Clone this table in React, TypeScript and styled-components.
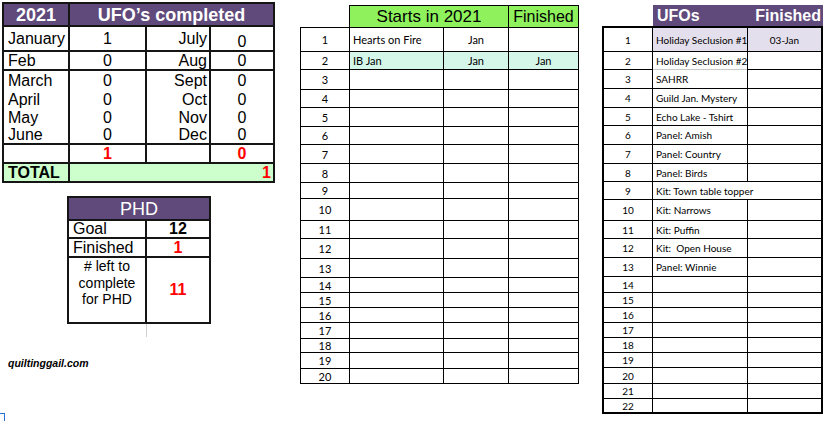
import React from "react";
import styled, { createGlobalStyle } from "styled-components";

const GlobalStyle = createGlobalStyle`
  html, body { margin: 0; padding: 0; background: #fff; }
  body { font-family: "Liberation Sans", Arial, sans-serif; color: #000; }
`;

const PURPLE = "#604a7b";
const LAVENDER = "#e4dfec";
const MINT = "#d5f7ea";
const LIME = "#8ff25d";
const PALE_GREEN = "#ccffcc";
const RED = "#ff0000";

const Page = styled.div`
  position: relative;
  display: flex;
  align-items: flex-start;
  width: 831px;
  height: 421px;
  overflow: hidden;
`;

/* ---------- left: monthly summary + PHD ---------- */

const LeftColumn = styled.div`
  display: flex;
  flex-direction: column;
  align-items: flex-start;
  margin: 2px 0 0 2px;
`;

const Summary = styled.div`
  display: grid;
  grid-template-columns: 64px 75px 62px 62px;
  grid-template-rows: 21px 23px 17px 17px 17px 16px 16px 17px 17px;
  gap: 2px;
  padding: 2px;
  background: #151515;
`;

const Cell = styled.div<{
  $align?: "left" | "center" | "right";
  $valign?: "center" | "end";
  $bg?: string;
  $span?: number;
  $bold?: boolean;
  $red?: boolean;
  $open?: boolean;
}>`
  grid-column: span ${(p) => p.$span ?? 1};
  display: flex;
  align-items: ${(p) => (p.$valign === "end" ? "flex-end" : "center")};
  justify-content: ${(p) =>
    p.$align === "right" ? "flex-end" : p.$align === "left" ? "flex-start" : "center"};
  padding: ${(p) => (p.$align === "left" ? "0 2px 0 4px" : "0 2px")};
  margin-bottom: ${(p) => (p.$open ? "-2px" : "0")};
  background: ${(p) => p.$bg ?? "#fff"};
  color: ${(p) => (p.$red ? RED : "#000")};
  font-size: 16px;
  font-weight: ${(p) => (p.$bold ? 700 : 400)};
  line-height: 1;
  white-space: nowrap;
  overflow: hidden;
`;

const HeadCell = styled(Cell)`
  background: ${PURPLE};
  color: #fff;
  font-size: 18px;
`;

const PhdTable = styled.div`
  display: grid;
  grid-template-columns: 76px 62px;
  grid-template-rows: 21px 16px 17px 64px;
  gap: 2px;
  padding: 2px;
  margin: 13px 0 0 65px;
  background: #151515;
`;

const LeftNote = styled.div`
  display: flex;
  align-items: flex-start;
  justify-content: center;
  background: #fff;
  font-size: 14px;
  line-height: 16.5px;
  text-align: center;
`;

const GuideLine = styled.div`
  width: 1px;
  height: 13px;
  margin-left: 144px;
  background: #cfcfcf;
`;

const Footer = styled.div`
  margin: 20px 0 0 6px;
  font-size: 10.5px;
  line-height: 12px;
  font-weight: 700;
  font-style: italic;
`;

/* ---------- sheet tables (middle & right) ---------- */

const SheetColumn = styled.div<{ $left: number }>`
  display: flex;
  flex-direction: column;
  margin-left: ${(p) => p.$left}px;
  padding-top: 5px;
`;

const StartsHeader = styled.div`
  display: grid;
  grid-template-columns: 158px 69px;
  grid-template-rows: 21px;
  gap: 1px;
  padding: 1px 1px 0 1px;
  margin-left: 49px;
  background: #000;
`;

const LimeCell = styled.div<{ $size: number }>`
  display: flex;
  align-items: center;
  justify-content: center;
  background: ${LIME};
  font-size: ${(p) => p.$size}px;
  line-height: 1;
`;

const UfoHeader = styled.div`
  display: flex;
  align-items: center;
  justify-content: space-between;
  width: 170px;
  height: 21px;
  margin-left: 51px;
  padding: 0 2px 0 4px;
  box-sizing: border-box;
  background: ${PURPLE};
  color: #fff;
  font-size: 16px;
  font-weight: 700;
`;

const Sheet = styled.div<{ $cols: string; $rows: number[]; $pad: number; $font: number }>`
  display: grid;
  grid-template-columns: ${(p) => p.$cols};
  grid-template-rows: ${(p) => p.$rows.map((r) => `${r}px`).join(" ")};
  gap: 1px;
  padding: ${(p) => p.$pad}px;
  background: #000;
  font-family: Lato, "Open Sans", sans-serif;
  font-size: ${(p) => p.$font}px;
`;

const SheetCell = styled.div<{
  $align?: "left" | "center";
  $bg?: string;
  $span?: number;
  $softBottom?: boolean;
}>`
  grid-column: span ${(p) => p.$span ?? 1};
  display: flex;
  align-items: center;
  justify-content: ${(p) => (p.$align === "left" ? "flex-start" : "center")};
  padding: 0 3px;
  background: ${(p) => p.$bg ?? "#fff"};
  line-height: 1;
  white-space: pre;
  box-shadow: ${(p) => (p.$softBottom ? "0 1px 0 #c9c9c9" : "none")};
  position: ${(p) => (p.$softBottom ? "relative" : "static")};
  z-index: ${(p) => (p.$softBottom ? 1 : "auto")};
`;

const Cursor = styled.div`
  position: absolute;
  left: 0;
  top: 413px;
  width: 5px;
  height: 9px;
  border-top: 1px solid #2a6fd6;
  border-right: 1px solid #2a6fd6;
  box-sizing: border-box;
`;

const months: [string, string, string, string][] = [
  ["January", "1", "July", "0"],
  ["Feb", "0", "Aug", "0"],
  ["March", "0", "Sept", "0"],
  ["April", "0", "Oct", "0"],
  ["May", "0", "Nov", "0"],
  ["June", "0", "Dec", "0"],
];
// rows that run into the next one without a ruled line
const openRows = ["March", "April", "May"];

const startRows = [23, 17, 19, 17, 18, 17, 18, 18, 15, 21, 17, 19, 18, 14, 14, 14, 15, 13, 15, 14];
const starts: Record<number, [string, string, string]> = {
  1: ["Hearts on Fire", "Jan", ""],
  2: ["IB Jan", "Jan", "Jan"],
};

const ufoRows = [23, 17, 18, 18, 17, 18, 18, 17, 17, 20, 17, 18, 18, 15, 14, 14, 14, 14, 14, 15, 14, 13];
const ufos = [
  "Holiday Seclusion #1",
  "Holiday Seclusion #2",
  "SAHRR",
  "Guild Jan. Mystery",
  "Echo Lake - Tshirt",
  "Panel: Amish",
  "Panel: Country",
  "Panel: Birds",
  "Kit: Town table topper",
  "Kit: Narrows",
  "Kit: Puffin",
  "Kit:  Open House",
  "Panel: Winnie",
];

export default function App() {
  return (
    <>
      <GlobalStyle />
      <Page>
        <LeftColumn>
          <Summary>
            <HeadCell $bold>2021</HeadCell>
            <HeadCell $bold $span={3}>UFO’s completed</HeadCell>
            {months.map(([m1, v1, m2, v2]) => {
              const open = openRows.includes(m1);
              return (
                <React.Fragment key={m1}>
                  <Cell $align="left" $open={open}>{m1}</Cell>
                  <Cell $open={open}>{v1}</Cell>
                  <Cell $align="right" $open={open}>{m2}</Cell>
                  <Cell $open={open} $valign={m1 === "January" ? "end" : "center"}>{v2}</Cell>
                </React.Fragment>
              );
            })}
            <Cell />
            <Cell $bold $red>1</Cell>
            <Cell />
            <Cell $bold $red>0</Cell>
            <Cell $align="left" $bg={PALE_GREEN} $bold>TOTAL</Cell>
            <Cell $align="right" $bg={PALE_GREEN} $span={3} $bold $red>1</Cell>
          </Summary>

          <PhdTable>
            <HeadCell $span={2}>PHD</HeadCell>
            <Cell $align="left">Goal</Cell>
            <Cell $bold>12</Cell>
            <Cell $align="left">Finished</Cell>
            <Cell $bold $red>1</Cell>
            <LeftNote>
              # left to
              <br />
              complete
              <br />
              for PHD
            </LeftNote>
            <Cell $bold $red>11</Cell>
          </PhdTable>
          <GuideLine />
          <Footer>quiltinggail.com</Footer>
        </LeftColumn>

        <SheetColumn $left={25}>
          <StartsHeader>
            <LimeCell $size={17}>Starts in 2021</LimeCell>
            <LimeCell $size={16}>Finished</LimeCell>
          </StartsHeader>
          <Sheet $cols="48px 93px 64px 69px" $rows={startRows} $pad={1} $font={11}>
            {startRows.map((_, i) => {
              const n = i + 1;
              const row = starts[n] ?? ["", "", ""];
              const bg = n === 2 ? MINT : undefined;
              return (
                <React.Fragment key={n}>
                  <SheetCell>{n}</SheetCell>
                  <SheetCell $align="left" $bg={bg}>{row[0]}</SheetCell>
                  <SheetCell $bg={bg}>{row[1]}</SheetCell>
                  <SheetCell $bg={bg}>{row[2]}</SheetCell>
                </React.Fragment>
              );
            })}
          </Sheet>
        </SheetColumn>

        <SheetColumn $left={23}>
          <UfoHeader>
            <span>UFOs</span>
            <span>Finished</span>
          </UfoHeader>
          <Sheet $cols="48px 94px 73px" $rows={ufoRows} $pad={2} $font={10}>
            {ufoRows.map((_, i) => {
              const n = i + 1;
              const name = ufos[i] ?? "";
              const bg = n === 1 ? LAVENDER : undefined;
              return (
                <React.Fragment key={n}>
                  <SheetCell>{n}</SheetCell>
                  {n === 9 ? (
                    <SheetCell $align="left" $span={2}>{name}</SheetCell>
                  ) : (
                    <>
                      <SheetCell $align="left" $bg={bg} $softBottom={n === 2}>{name}</SheetCell>
                      <SheetCell $bg={bg}>{n === 1 ? "03-Jan" : ""}</SheetCell>
                    </>
                  )}
                </React.Fragment>
              );
            })}
          </Sheet>
        </SheetColumn>

        <Cursor />
      </Page>
    </>
  );
}
